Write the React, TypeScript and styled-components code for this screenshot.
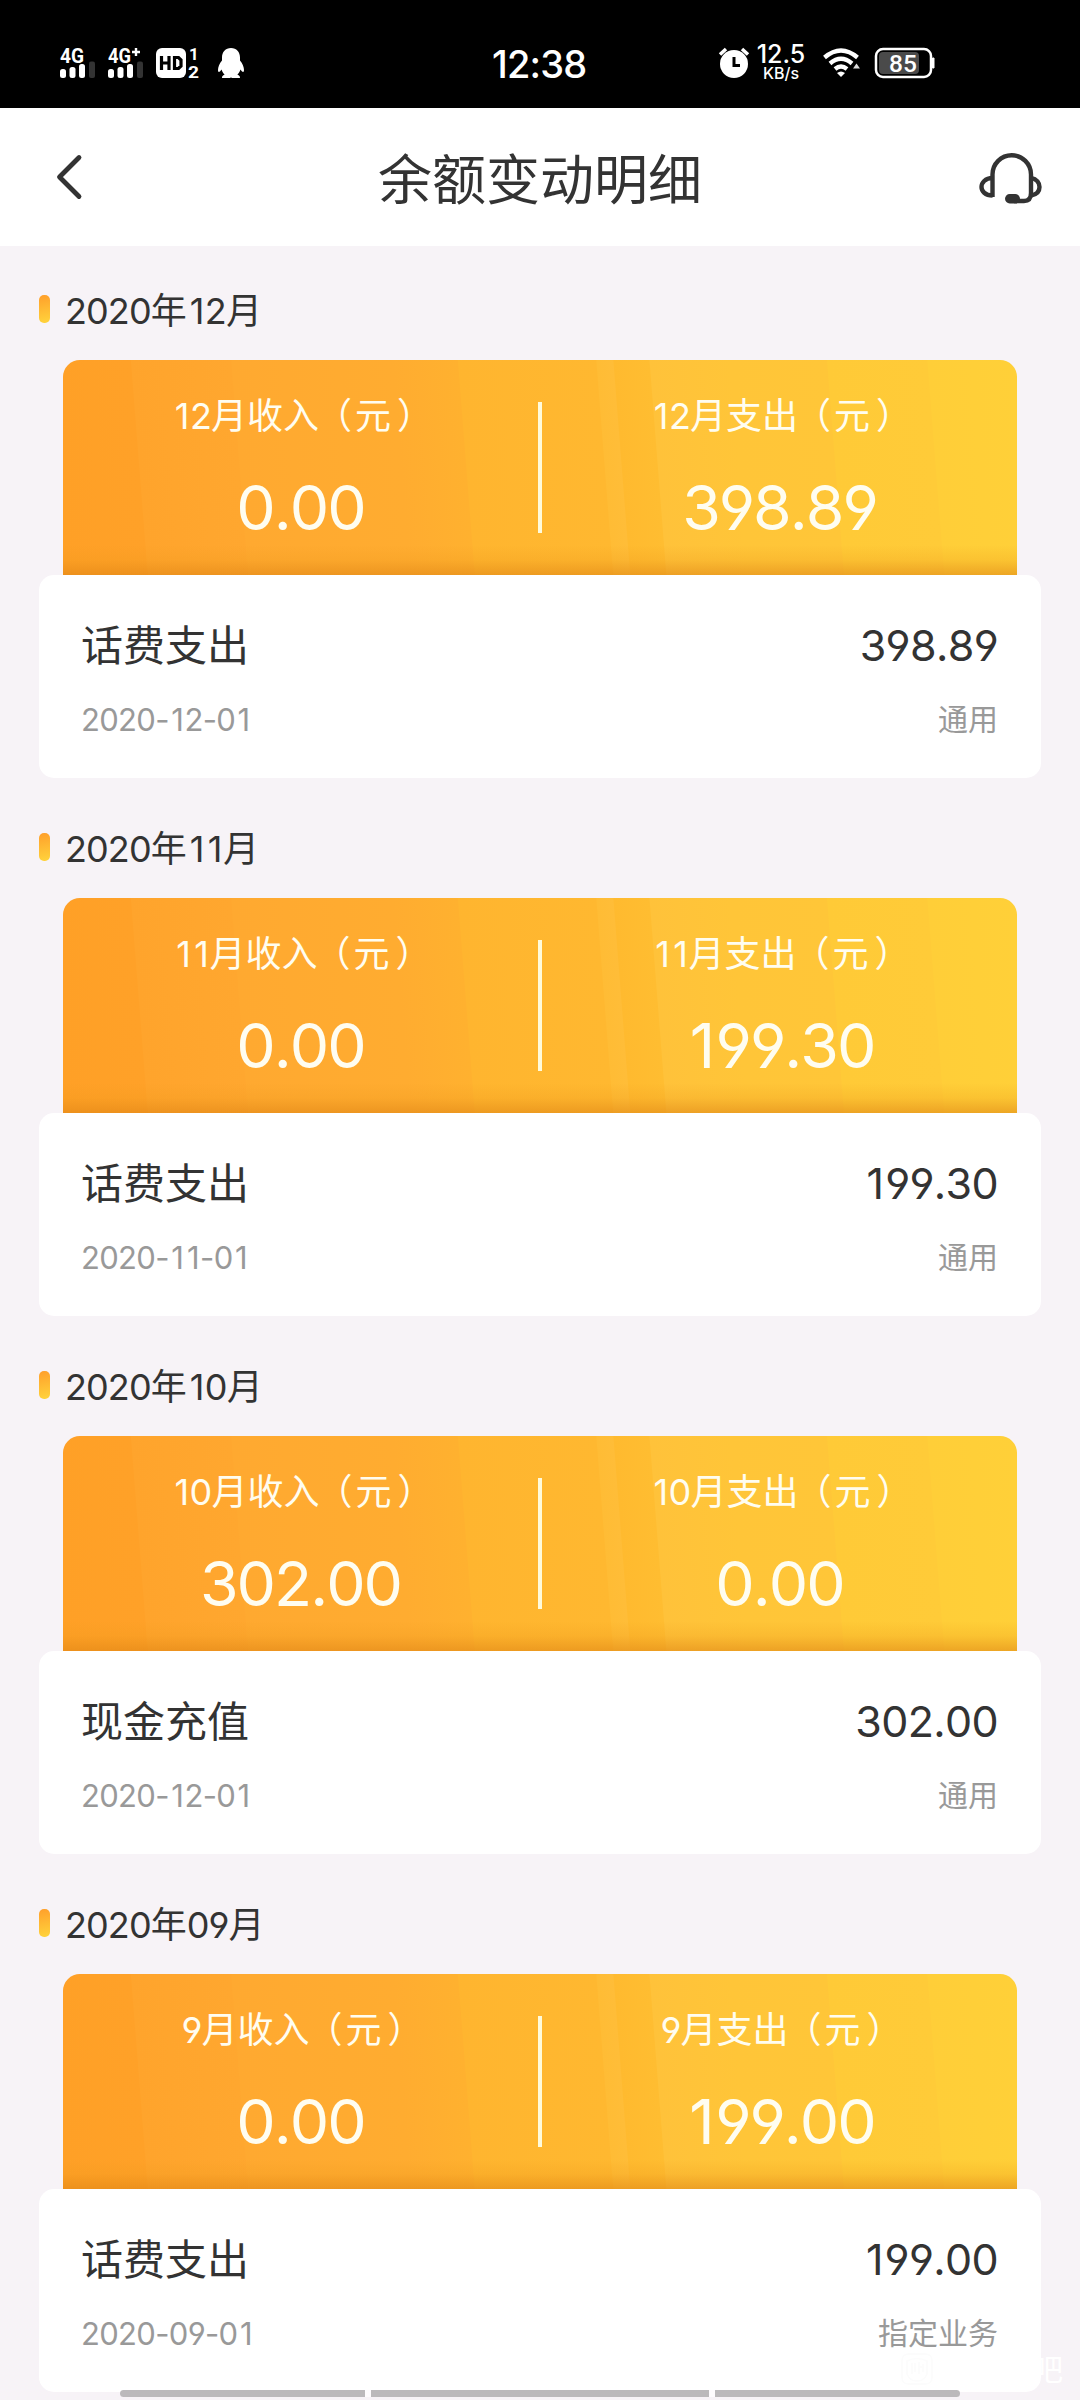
import React from "react";
import styled, { createGlobalStyle } from "styled-components";

const GlobalStyle = createGlobalStyle`
  * { box-sizing: border-box; }
  body {
    margin: 0;
    background: #f7f3f7;
    font-family: Inter, "Noto Sans CJK SC", sans-serif;
    font-feature-settings: "cv04";
    color: #333;
  }
`;

const Screen = styled.div`
  position: relative;
  width: 1080px;
  height: 2400px;
  overflow: hidden;
  background: #f7f3f7;
`;

const StatusBar = styled.div`
  display: grid;
  grid-template-columns: 432px 100px 1fr;
  align-items: center;
  height: 108px;
  padding: 18px 145px 0 60px;
  background: #000;
  color: #fff;

  svg {
    flex: none;
    overflow: visible;
  }
`;

const StatusLeft = styled.div`
  display: flex;
  align-items: center;
  gap: 12px;
  height: 32px;

  svg:last-child {
    margin-left: 6px;
  }
`;

const StatusRight = styled.div`
  display: flex;
  align-items: center;
  justify-content: flex-end;
  height: 32px;
`;

const Clock = styled.div`
  padding-top: 2px;
  font-size: 38px;
  font-weight: 500;
  line-height: 32px;
  letter-spacing: -0.8px;
  white-space: nowrap;
`;

const Speed = styled.div`
  display: flex;
  flex-direction: column;
  align-items: center;
  width: 50px;
  margin: 0 17px 0 7px;
  font-weight: 500;
`;

const SpeedValue = styled.span`
  font-size: 25px;
  line-height: 20px;
`;

const SpeedUnit = styled.span`
  font-size: 16px;
  line-height: 18px;
`;

const Header = styled.header`
  display: grid;
  grid-template-columns: 90px 1fr 90px;
  align-items: center;
  height: 138px;
  padding: 0 35px;
  background: #fff;
`;

const Title = styled.h1`
  margin: 7px 0 0;
  font-size: 54px;
  font-weight: 400;
  line-height: 60px;
  text-align: center;
`;

const IconSlot = styled.div<{ $end?: boolean }>`
  display: flex;
  justify-content: ${(p) => (p.$end ? "flex-end" : "flex-start")};
  padding: ${(p) => (p.$end ? "6px 2px 0 0" : "0")};
`;

const Month = styled.section`
  height: 538px;
  padding: 0 39px;
`;

const MonthTitle = styled.h2`
  display: flex;
  align-items: center;
  gap: 15px;
  height: 114px;
  margin: 0;
  padding-top: 9px;
  font-size: 36px;
  font-weight: 400;
`;

const Marker = styled.i`
  width: 11px;
  height: 28px;
  margin-top: 2px;
  border-radius: 5px;
  background: linear-gradient(170deg, #ff9f2b, #ffd43c);
`;

const Summary = styled.div`
  display: grid;
  grid-template-columns: 1fr 4px 1fr;
  height: 215px;
  margin: 0 24px;
  border-radius: 17px 17px 0 0;
  color: #fffdf0;
  background:
    linear-gradient(to top, rgba(222, 132, 20, 0.55), rgba(235, 150, 25, 0.22) 15px, rgba(240, 160, 30, 0) 30px),
    linear-gradient(
      85.5deg,
      #ffa026 0, #ffa128 84px,
      #ffa42c 85px, #ffa72f 184px,
      #ffa930 185px, #ffac30 345px,
      #ffb12f 410px, #ffb52f 411px,
      #ffb830 548px, #ffbc35 549px,
      #ffbd38 565px, #ffba2f 566px,
      #ffbd31 601px, #ffc23a 602px,
      #ffc538 683px, #ffc638 778px,
      #ffca37 779px, #ffcb38 878px,
      #ffce38 879px, #ffd038 100%
    );
`;

const Total = styled.div`
  display: flex;
  flex-direction: column;
  align-items: center;
`;

const TotalLabel = styled.span`
  margin: 36px 2px 0 0;
  font-size: 36px;
  line-height: 40px;
  white-space: nowrap;
`;

const TotalValue = styled.span`
  margin-top: 36px;
  font-size: 62.5px;
  line-height: 70px;
`;

const Divider = styled.i`
  height: 131px;
  margin-top: 42px;
  background: #fffbdc;
`;

const Card = styled.div`
  height: 203px;
  padding: 42px 43px 0 42px;
  border-radius: 15px;
  background: #fff;
`;

const Row = styled.div`
  display: flex;
  justify-content: space-between;
`;

const MainRow = styled(Row)`
  height: 58px;
  font-size: 42px;
  line-height: 58px;
`;

const Amount = styled.span`
  font-size: 43px;
  line-height: 56px;
`;

const SubRow = styled(Row)`
  margin-top: 22px;
  color: #999;
  font-size: 30px;
  line-height: 44px;
`;

const DateText = styled.span`
  font-size: 31px;
  line-height: 46px;
`;

const Digits = styled.span<{ $tracking: number }>`
  font-kerning: none;
  letter-spacing: ${(p) => p.$tracking}em;
`;

const One = styled.span`
  padding: 0 0.04em 0 0.08em;
`;

const OpenParen = styled.span`
  margin: 0 3px 0 -3px;
`;

const CloseParen = styled.span`
  margin: 0 -6px 0 6px;
`;

const NavBar = styled.div`
  position: absolute;
  left: 120px;
  bottom: 3px;
  display: grid;
  grid-template-columns: 245px 338px 245px;
  gap: 6px;
  height: 7px;
  border-radius: 4px;
  overflow: hidden;
  background: #fdfbfd;
`;

const NavSegment = styled.i`
  background: #bbb9bb;
`;

const Watermark = styled.div`
  position: absolute;
  right: 17px;
  bottom: 10px;
  display: flex;
  align-items: center;
  gap: 100px;
  color: #fff;
  font-size: 30px;
  line-height: 42px;
`;

const SignalIcon = ({ label, plus }: { label: string; plus?: boolean }) => (
  <svg width="36" height="32" viewBox="0 0 36 32">
    <text x="0" y="16" fill="#fff" fontFamily="Roboto" fontWeight="700" fontSize="21" textLength={plus ? 23 : 24} lengthAdjust="spacingAndGlyphs">
      {label}
    </text>
    {plus && <path d="M28 1v8M24 5h8" stroke="#fff" strokeWidth="2.400" />}
    <rect x="0" y="22" width="6" height="9" rx="2.500" fill="#fff" />
    <rect x="9.500" y="20" width="6" height="11" rx="2.500" fill="#fff" />
    <rect x="19" y="17" width="6" height="14" rx="2.500" fill="#fff" />
    <rect x="29" y="14.500" width="6" height="16.500" rx="2" fill="#333" />
  </svg>
);

const HdIcon = () => (
  <svg width="43" height="32" viewBox="0 0 43 32">
    <rect x="0" y="1" width="30" height="30" rx="6" fill="#fff" />
    <path d="M5.500 9v14M13 9v14M5.500 16h7.500M18.500 10.500h4l2.500 2.500v6l-2.500 2.500h-4z" fill="none" stroke="#000" strokeWidth="3.200" />
    <text x="33" y="13" fill="#fff" fontFamily="Roboto" fontWeight="700" fontSize="17">1</text>
    <text x="32" y="31" fill="#fff" fontFamily="Roboto" fontWeight="700" fontSize="17" textLength="11" lengthAdjust="spacingAndGlyphs">2</text>
  </svg>
);

const PenguinIcon = () => (
  <svg width="28" height="32" viewBox="0 0 28 32">
    <path
      d="M14 1C8.500 1 5 5 5 10.500v3C2.500 16.500 1 20 1 23c0 2 .8 2.700 2.200 1.200l1.400-1.700c.5 2 1.600 3.800 3 5.200-2 .6-2.600 1.400-2.600 3.300h8.200l.8-.8.800.8H23c0-1.900-.6-2.700-2.600-3.300 1.400-1.400 2.500-3.200 3-5.200l1.400 1.700C26.200 25.700 27 25 27 23c0-3-1.500-6.500-4-9.500v-3C23 5 19.500 1 14 1z"
      fill="#fff"
    />
  </svg>
);

const AlarmIcon = () => (
  <svg width="30" height="32" viewBox="0 0 30 32">
    <circle cx="15" cy="17" r="14" fill="#fff" />
    <path d="M1 7.500L7 2M29 7.500L23 2" stroke="#fff" strokeWidth="3.500" />
    <path d="M15 10v8.500h6" fill="none" stroke="#000" strokeWidth="3" />
  </svg>
);

const WifiIcon = () => (
  <svg width="37" height="30" viewBox="0 0 37 30">
    <g fill="none" stroke="#fff" strokeWidth="4.300">
      <path d="M1.500 9.500Q18 -4.500 34.500 9.500" />
      <path d="M7 15.500Q18 6 29 15.500" />
      <path d="M12 21Q18 16 24 21" />
    </g>
    <path d="M14 25q4-3 8 0l-4 4z" fill="#fff" />
    <path d="M33.500 15.500l3.500 5h-7z" fill="#ddd" />
  </svg>
);

const BatterySvg = styled.svg`
  margin-left: 15px;
`;

const BatteryIcon = () => (
  <BatterySvg width="60" height="32" viewBox="0 0 60 32">
    <rect x="1" y="2" width="55" height="28" rx="7" fill="#000" stroke="#fff" strokeWidth="2.500" />
    <rect x="4" y="5" width="40" height="22" rx="4" fill="#4a4a4a" />
    <path d="M57.500 11h1.500v10h-1.500z" fill="#fff" stroke="#fff" />
    <text x="14" y="24.500" fill="#fff" fontFamily="Roboto" fontWeight="500" fontSize="24.500" textLength="28">85</text>
  </BatterySvg>
);

const BackIcon = () => (
  <svg width="60" height="60" viewBox="35 147 60 60">
    <path d="M79 157.500L59.500 177l19.500 19.500" fill="none" stroke="#333" strokeWidth="4.800" strokeLinecap="round" strokeLinejoin="round" />
  </svg>
);

const HeadsetIcon = () => (
  <svg width="64" height="56" viewBox="0 0 64 56">
    <g fill="none" stroke="#333" strokeWidth="4.400" strokeLinejoin="round">
      <path d="M13.500 45V22.500a19.200 19.200 0 0 1 38.500 0V41q0 8-7 8H35" />
      <path d="M13.500 26C6 26 2.500 31 2.500 35s3.500 8.500 11 8.500" />
      <path d="M52 26c6 1 8.500 5 8.500 9S58 42.500 52 43.500" />
    </g>
    <rect x="26" y="42" width="15" height="9.500" rx="4.700" fill="#333" />
  </svg>
);

const TiebaBadge = () => (
  <svg width="32" height="32" viewBox="0 0 32 32" fill="none" stroke="#fcfcfc" strokeWidth="1.500">
    <rect x="1" y="1" width="30" height="30" rx="6" />
    <path d="M6 8q10-5 20 0v13q-3 7-10 7t-10-7zM11 10v11M14 10v9M18 9v12M22 11v8M18 14h5" />
  </svg>
);

interface MonthData {
  title: string;
  month: string;
  income: string;
  expense: string;
  item: string;
  amount: string;
  date: string;
  scope: string;
}

const months: MonthData[] = [
  { title: "2020年12月", month: "12", income: "0.00", expense: "398.89", item: "话费支出", amount: "398.89", date: "2020-12-01", scope: "通用" },
  { title: "2020年11月", month: "11", income: "0.00", expense: "199.30", item: "话费支出", amount: "199.30", date: "2020-11-01", scope: "通用" },
  { title: "2020年10月", month: "10", income: "302.00", expense: "0.00", item: "现金充值", amount: "302.00", date: "2020-12-01", scope: "通用" },
  { title: "2020年09月", month: "9", income: "0.00", expense: "199.00", item: "话费支出", amount: "199.00", date: "2020-09-01", scope: "指定业务" },
];

const Num = ({ text, tracking = -0.025 }: { text: string; tracking?: number }) => (
  <Digits $tracking={tracking}>
    {text.split(/(1)/).map((part, i) => (part === "1" ? <One key={i}>1</One> : part))}
  </Digits>
);

const Mixed = ({ text }: { text: string }) => (
  <span>
    {text.split(/(\d+|（|）)/).map((part, i) => {
      if (/\d/.test(part)) return <Num key={i} text={part} />;
      if (part === "（") return <OpenParen key={i}>{part}</OpenParen>;
      if (part === "）") return <CloseParen key={i}>{part}</CloseParen>;
      return part;
    })}
  </span>
);

const SummaryTotal = ({ label, value }: { label: string; value: string }) => (
  <Total>
    <TotalLabel><Mixed text={label} /></TotalLabel>
    <TotalValue><Num text={value} tracking={-0.032} /></TotalValue>
  </Total>
);

export default function App() {
  return (
    <Screen>
      <GlobalStyle />
      <StatusBar>
        <StatusLeft>
          <SignalIcon label="4G" />
          <SignalIcon label="4G" plus />
          <HdIcon />
          <PenguinIcon />
        </StatusLeft>
        <Clock>12:38</Clock>
        <StatusRight>
          <AlarmIcon />
          <Speed>
            <SpeedValue>12.5</SpeedValue>
            <SpeedUnit>KB/s</SpeedUnit>
          </Speed>
          <WifiIcon />
          <BatteryIcon />
        </StatusRight>
      </StatusBar>
      <Header>
        <IconSlot><BackIcon /></IconSlot>
        <Title>余额变动明细</Title>
        <IconSlot $end><HeadsetIcon /></IconSlot>
      </Header>
      {months.map((m) => (
        <Month key={m.title}>
          <MonthTitle>
            <Marker />
            <Mixed text={m.title} />
          </MonthTitle>
          <Summary>
            <SummaryTotal label={`${m.month}月收入（元）`} value={m.income} />
            <Divider />
            <SummaryTotal label={`${m.month}月支出（元）`} value={m.expense} />
          </Summary>
          <Card>
            <MainRow>
              <span>{m.item}</span>
              <Amount><Num text={m.amount} tracking={-0.015} /></Amount>
            </MainRow>
            <SubRow>
              <DateText><Num text={m.date} tracking={-0.022} /></DateText>
              <span>{m.scope}</span>
            </SubRow>
          </Card>
        </Month>
      ))}
      <Watermark>
        <TiebaBadge />
        <span>吧</span>
      </Watermark>
      <NavBar>
        <NavSegment />
        <NavSegment />
        <NavSegment />
      </NavBar>
    </Screen>
  );
}
